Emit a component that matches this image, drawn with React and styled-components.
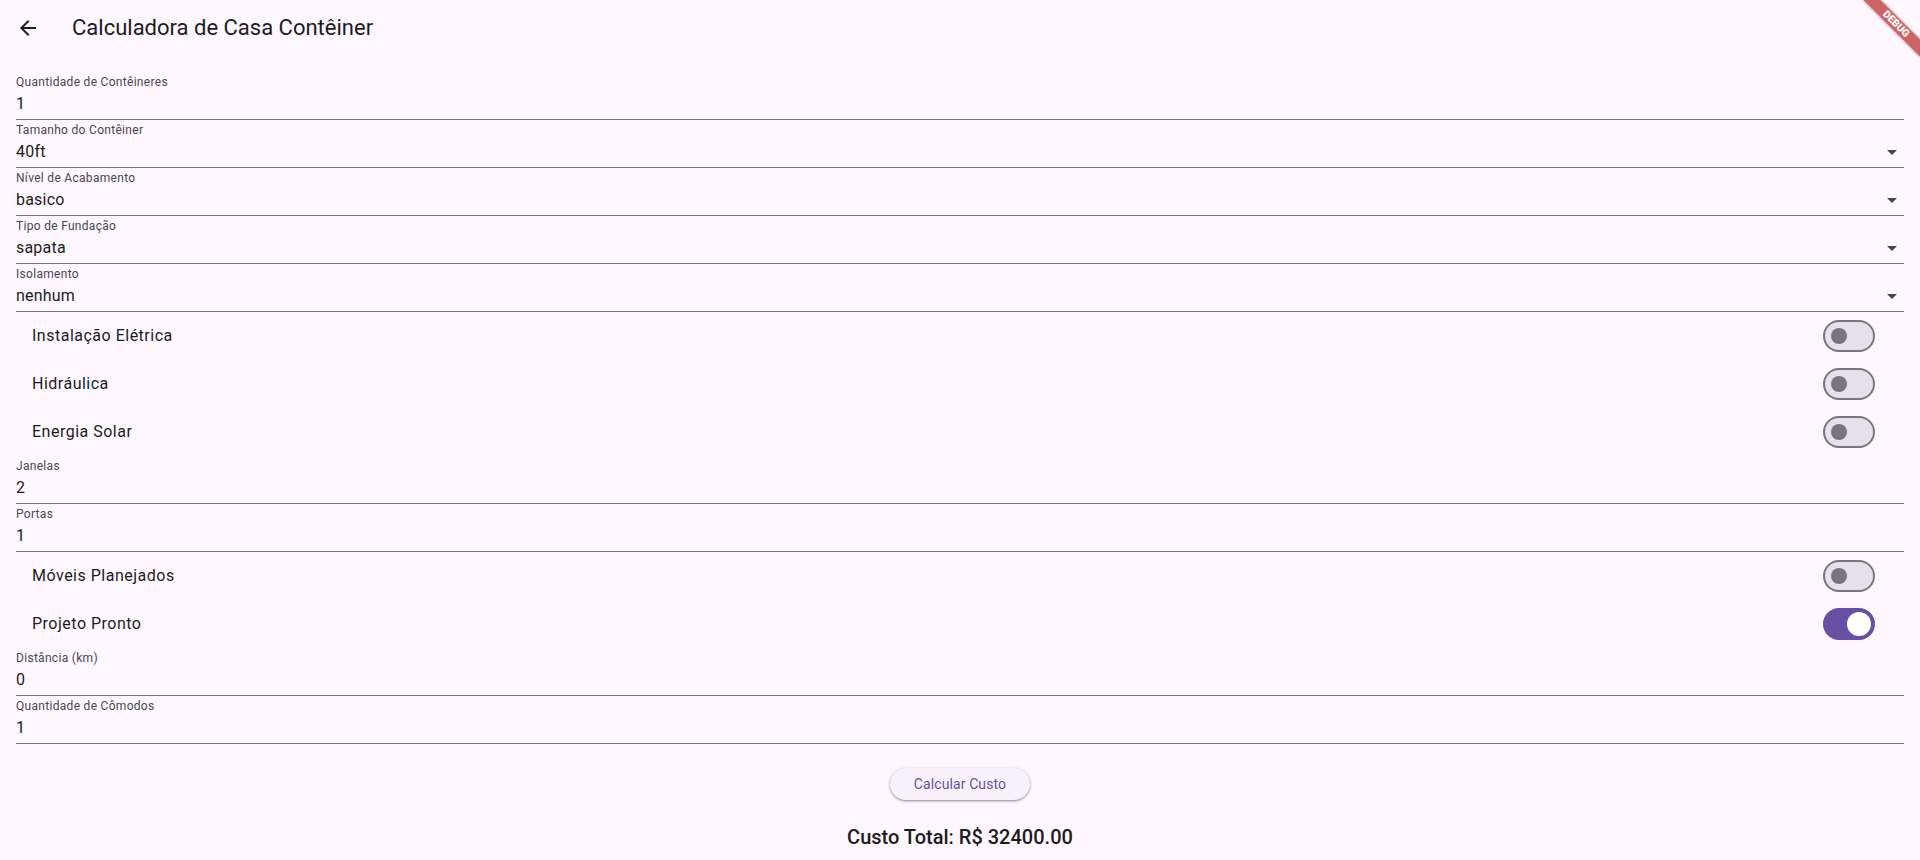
import React from "react";
import styled, { createGlobalStyle } from "styled-components";

const GlobalStyle = createGlobalStyle`
  html, body {
    margin: 0;
    padding: 0;
    background: #FEF7FF;
    overflow: hidden;
  }
  body {
    font-family: Roboto, "Liberation Sans", sans-serif;
    color: #1D1B20;
  }
  * { box-sizing: border-box; }
`;

const Page = styled.div`
  position: relative;
  width: 100%;
  min-height: 860px;
  background: #FEF7FF;
  overflow: hidden;
`;

const AppBar = styled.header`
  height: 56px;
  display: flex;
  align-items: center;
`;

const BackButton = styled.button`
  width: 56px;
  height: 56px;
  border: none;
  background: transparent;
  display: flex;
  align-items: center;
  justify-content: center;
  padding: 0;
  color: #1D1B20;
  cursor: pointer;
`;

const Title = styled.h1`
  margin: 0 0 0 16px;
  font-size: 22px;
  font-weight: 400;
  line-height: 28px;
  color: #1D1B20;
`;

const Body = styled.main`
  padding: 16px;
  display: flex;
  flex-direction: column;
`;

const Field = styled.div`
  height: 48px;
  border-bottom: 1px solid #79747E;
  display: flex;
  flex-direction: column;
`;

const Label = styled.div`
  padding-top: 2px;
  font-size: 12px;
  line-height: 16px;
  letter-spacing: 0.3px;
  color: #49454F;
`;

const ValueRow = styled.div`
  margin-top: 2px;
  height: 24px;
  display: flex;
  align-items: center;
  justify-content: space-between;
`;

const Value = styled.span`
  font-size: 16px;
  line-height: 24px;
  letter-spacing: 0.2px;
  color: #1D1B20;
`;

const SwitchRow = styled.div`
  height: 48px;
  display: flex;
  align-items: center;
  justify-content: space-between;
  padding: 0 25px 0 16px;
`;

const SwitchLabel = styled.span`
  font-size: 16px;
  line-height: 24px;
  letter-spacing: 0.5px;
  color: #1D1B20;
`;

const Track = styled.div`
  position: relative;
  width: 52px;
  height: 32px;
  margin: 0 4px;
  border-radius: 16px;
  background: ${(p) => (p.$on ? "#6750A4" : "#E6E0E9")};
  border: 2px solid ${(p) => (p.$on ? "#6750A4" : "#79747E")};
`;

const Thumb = styled.span`
  position: absolute;
  top: 50%;
  left: ${(p) => (p.$on ? "34px" : "14px")};
  width: ${(p) => (p.$on ? "24px" : "16px")};
  height: ${(p) => (p.$on ? "24px" : "16px")};
  border-radius: 50%;
  background: ${(p) => (p.$on ? "#FFFFFF" : "#79747E")};
  transform: translate(-50%, -50%);
`;

const ButtonRow = styled.div`
  display: flex;
  justify-content: center;
  padding-top: 24px;
`;

const ElevatedButton = styled.button`
  height: 32px;
  padding: 0 24px;
  border: none;
  border-radius: 16px;
  background: #F7F2FA;
  color: #6750A4;
  font-family: Roboto, "Liberation Sans", sans-serif;
  font-size: 14px;
  font-weight: 400;
  letter-spacing: 0.1px;
  box-shadow: 0 1px 2px rgba(0, 0, 0, 0.3), 0 1px 3px 1px rgba(0, 0, 0, 0.12);
  cursor: pointer;
`;

const Total = styled.div`
  margin-top: 24px;
  text-align: center;
  font-size: 20px;
  line-height: 26px;
  font-weight: 500;
  color: #1D1B20;
`;

const Banner = styled.div`
  position: absolute;
  left: calc(100% - 40px);
  top: 28px;
  width: 80px;
  height: 12px;
  transform-origin: 40px -28px;
  transform: rotate(45deg);
  background: rgba(183, 28, 28, 0.68);
  box-shadow: 0 0 3px rgba(0, 0, 0, 0.45);
  color: #fff;
  font-family: Roboto, "Liberation Sans", sans-serif;
  font-size: 10.2px;
  font-weight: 900;
  line-height: 12px;
  text-align: center;
  pointer-events: none;
`;

const ArrowBack = () => (
  <svg width="24" height="24" viewBox="0 0 24 24" fill="currentColor">
    <path d="M20 11H7.83l5.59-5.59L12 4l-8 8 8 8 1.41-1.41L7.83 13H20v-2z" />
  </svg>
);

const DropArrow = () => (
  <svg width="24" height="24" viewBox="0 0 24 24" fill="#49454F">
    <path d="M7 10l5 5 5-5z" />
  </svg>
);

const TextField = ({ label, value, dropdown }) => (
  <Field>
    <Label>{label}</Label>
    <ValueRow>
      <Value>{value}</Value>
      {dropdown && <DropArrow />}
    </ValueRow>
  </Field>
);

const SwitchTile = ({ label, on }) => (
  <SwitchRow>
    <SwitchLabel>{label}</SwitchLabel>
    <Track $on={on}>
      <Thumb $on={on} />
    </Track>
  </SwitchRow>
);

export default function App() {
  return (
    <Page>
      <GlobalStyle />
      <AppBar>
        <BackButton aria-label="Voltar">
          <ArrowBack />
        </BackButton>
        <Title>Calculadora de Casa Contêiner</Title>
      </AppBar>
      <Body>
        <TextField label="Quantidade de Contêineres" value="1" />
        <TextField label="Tamanho do Contêiner" value="40ft" dropdown />
        <TextField label="Nível de Acabamento" value="basico" dropdown />
        <TextField label="Tipo de Fundação" value="sapata" dropdown />
        <TextField label="Isolamento" value="nenhum" dropdown />
        <SwitchTile label="Instalação Elétrica" />
        <SwitchTile label="Hidráulica" />
        <SwitchTile label="Energia Solar" />
        <TextField label="Janelas" value="2" />
        <TextField label="Portas" value="1" />
        <SwitchTile label="Móveis Planejados" />
        <SwitchTile label="Projeto Pronto" on />
        <TextField label="Distância (km)" value="0" />
        <TextField label="Quantidade de Cômodos" value="1" />
        <ButtonRow>
          <ElevatedButton>Calcular Custo</ElevatedButton>
        </ButtonRow>
        <Total>Custo Total: R$ 32400.00</Total>
      </Body>
      <Banner>DEBUG</Banner>
    </Page>
  );
}
